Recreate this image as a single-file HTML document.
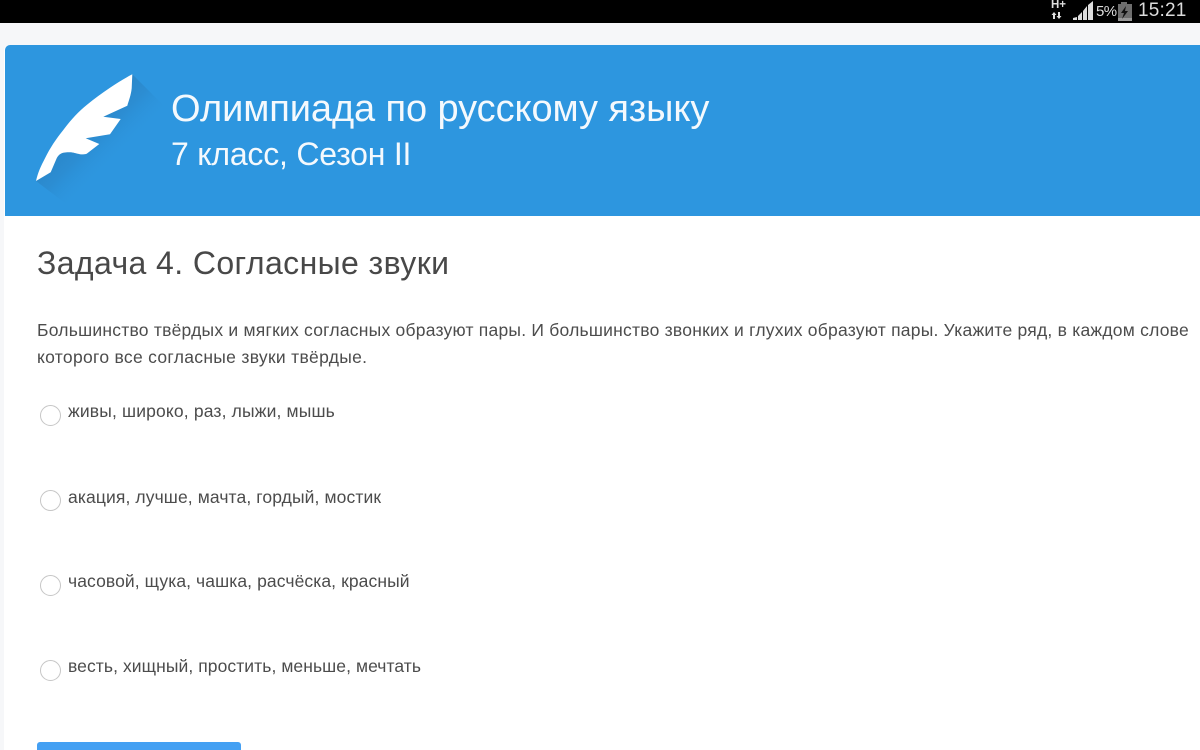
<!DOCTYPE html>
<html lang="ru"><head><meta charset="utf-8"><title>Олимпиада</title>
<style>
html,body{margin:0;padding:0;background:#f6f7f9;}
body{width:1200px;height:750px;overflow:hidden;position:relative;font-family:"Liberation Sans",sans-serif;color:#4a4a4a;}
.t{position:absolute;white-space:nowrap;line-height:1;}
.radio{position:absolute;left:40px;width:19px;height:19px;border:1.5px solid #c6c6c6;border-radius:50%;background:#fff;box-sizing:content-box;margin:-.5px;}
.opt{left:68px;font-size:17.5px;color:#4c4c4c;}
</style></head><body>
<div style="position:absolute;left:0;top:0;width:1200px;height:23px;background:#000"></div>
<div class="t" style="left:1138px;top:1px;font-size:19px;color:#dcdcdc;letter-spacing:.2px">15:21</div>
<div class="t" style="left:1096px;top:4px;font-size:15px;color:#ddd;letter-spacing:-.6px">5%</div>
<div class="t" style="left:1051px;top:0;font-size:11.500px;font-weight:bold;color:#ddd">H+</div>
<svg style="position:absolute;left:1050px;top:0" width="90" height="23">
<path d="M3 19v-4H1.500L4 12l2.500 3H5v4zM10 12v4h1.500L9 19l-2.500-3H8v-4z" fill="#ddd"/>
<path d="M23 20v-2l4-1v3zM28 20v-4l4-4v8zM33 20v-9l4-5v14zM38 20V5l5-4v19z" fill="#ddd"/>
<path d="M68 4h3V2h6v2h5v17H68z" fill="#6e6e6e"/>
<path d="M68 18h14v3H68z" fill="#999"/>
<path d="M76 6l-5 7h3l-2 6 6-8h-3z" fill="#111"/>
</svg>
<div style="position:absolute;left:4px;top:45px;width:1196px;height:705px;background:#fff;border-radius:5px 0 0 0"></div>
<div style="position:absolute;left:5px;top:45px;width:1195px;height:171px;background:#2d96df;border-radius:5px 0 0 0;overflow:hidden">
<svg style="position:absolute;left:-5px;top:-45px" width="240" height="230">
<defs><linearGradient id="g" gradientUnits="userSpaceOnUse" x1="82" y1="122" x2="118" y2="158"><stop offset="0" stop-color="#2878b4" stop-opacity=".55"/><stop offset=".45" stop-color="#2a80c0" stop-opacity=".4"/><stop offset="1" stop-color="#2d96df" stop-opacity="0"/></linearGradient></defs>
<path d="M132.300 74.300L185 127L90 222L36 181Z" fill="url(#g)"/>
<path d="M36 181C38 172 41 166 45 158.300C50 148 56 139 63.300 130C70 121 78 112 86.700 105C94 99 102 93 110 87.700C117 83 125 78 132.300 74.300L131.700 88.300C131 95 129 100 127.300 105.700L103.300 116.700L120.700 119L110 134.300L85.700 138.300L99.300 144L86.700 153.700C84 154.500 82 154.500 80 154.300C76 153.500 73 152.300 70 152.300C66 152.300 63.500 152.500 61.700 153.300C59 154.500 58 156 56.700 158.300L50.700 172.300Z" fill="#fff"/>
</svg>
</div>
<div class="t" style="left:171px;top:90px;font-size:38px;color:#f4f9fd;letter-spacing:-.09px">Олимпиада по русскому языку</div>
<div class="t" style="left:171px;top:138px;font-size:32px;color:#f4f9fd;letter-spacing:-.22px">7 класс, Сезон II</div>
<div class="t" style="left:37px;top:247px;font-size:32px;color:#484848;letter-spacing:.4px">Задача 4. Согласные звуки</div>
<div class="t" style="left:37px;top:322px;font-size:17.5px;color:#4c4c4c;letter-spacing:.227px">Большинство твёрдых и мягких согласных образуют пары. И большинство звонких и глухих образуют пары. Укажите ряд, в каждом слове</div>
<div class="t" style="left:37px;top:349px;font-size:17.5px;color:#4c4c4c;letter-spacing:.3px">которого все согласные звуки твёрдые.</div>
<div class="radio" style="top:405px"></div><div class="t opt" style="top:403px;letter-spacing:.155px">живы, широко, раз, лыжи, мышь</div>
<div class="radio" style="top:490px"></div><div class="t opt" style="top:489px;letter-spacing:.11px">акация, лучше, мачта, гордый, мостик</div>
<div class="radio" style="top:575px"></div><div class="t opt" style="top:573px;letter-spacing:.09px">часовой, щука, чашка, расчёска, красный</div>
<div class="radio" style="top:660px"></div><div class="t opt" style="top:658px;letter-spacing:.075px">весть, хищный, простить, меньше, мечтать</div>
<div style="position:absolute;left:37px;top:742px;width:204px;height:8px;background:#44a0f3;border-radius:3px 3px 0 0"></div>
</body></html>
